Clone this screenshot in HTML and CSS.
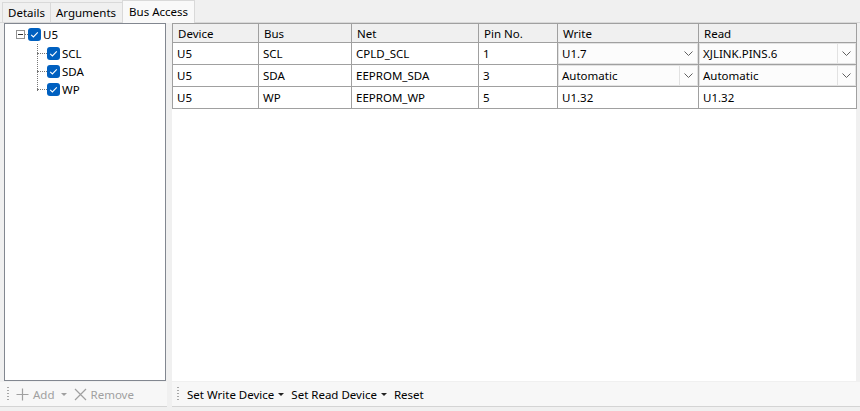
FILE: index.html
```html
<!DOCTYPE html>
<html>
<head>
<meta charset="utf-8">
<link rel="stylesheet" href="styles.css">
</head>
<body>
<div class="tabs">
  <div class="tab">Details</div>
  <div class="tab">Arguments</div>
  <div class="tab active">Bus Access</div>
</div>
<div class="panel">
  <div class="leftcol">
    <div class="tree">
      <div class="node root">
        <span class="expander"></span>
        <span class="dot-h short"></span>
        <span class="check"><svg width="13" height="13" viewBox="0 0 13 13"><rect x="0" y="0" width="13" height="13" rx="3" fill="#0060c0"/><path d="M3.2 6.8 L5.4 9 L9.8 4.4" stroke="#fff" stroke-width="1.1" fill="none"/></svg></span>
        <span class="label">U5</span>
      </div>
      <div class="children">
        <div class="node child">
          <span class="dot-h"></span>
          <span class="check"><svg width="13" height="13" viewBox="0 0 13 13"><rect x="0" y="0" width="13" height="13" rx="3" fill="#0060c0"/><path d="M3.2 6.8 L5.4 9 L9.8 4.4" stroke="#fff" stroke-width="1.1" fill="none"/></svg></span>
          <span class="label">SCL</span>
        </div>
        <div class="node child">
          <span class="dot-h"></span>
          <span class="check"><svg width="13" height="13" viewBox="0 0 13 13"><rect x="0" y="0" width="13" height="13" rx="3" fill="#0060c0"/><path d="M3.2 6.8 L5.4 9 L9.8 4.4" stroke="#fff" stroke-width="1.1" fill="none"/></svg></span>
          <span class="label">SDA</span>
        </div>
        <div class="node child last">
          <span class="dot-h"></span>
          <span class="check"><svg width="13" height="13" viewBox="0 0 13 13"><rect x="0" y="0" width="13" height="13" rx="3" fill="#0060c0"/><path d="M3.2 6.8 L5.4 9 L9.8 4.4" stroke="#fff" stroke-width="1.1" fill="none"/></svg></span>
          <span class="label">WP</span>
        </div>
      </div>
    </div>
    <div class="toolbar">
      <span class="grip"></span>
      <span class="tbtn disabled"><svg width="13" height="13" viewBox="0 0 13 13"><path d="M6.5 0.5 V12.5 M0.5 6.5 H12.5" stroke="#a0a0a0" stroke-width="1.2"/></svg>Add</span>
      <span class="caret disabled-caret"></span>
      <span class="tbtn disabled"><svg width="13" height="13" viewBox="0 0 13 13"><path d="M1 1 L12 12 M12 1 L1 12" stroke="#a0a0a0" stroke-width="1.2"/></svg>Remove</span>
    </div>
  </div>
  <div class="rightcol">
    <div class="grid">
      <table>
        <colgroup>
          <col style="width:86px"><col style="width:93px"><col style="width:127px"><col style="width:79px"><col style="width:141px"><col style="width:158px">
        </colgroup>
        <thead>
          <tr><th>Device</th><th>Bus</th><th>Net</th><th>Pin No.</th><th>Write</th><th>Read</th></tr>
        </thead>
        <tbody>
          <tr>
            <td>U5</td><td>SCL</td><td>CPLD_SCL</td><td>1</td>
            <td class="combo-cell"><div class="combo nosep"><span class="val">U1.7</span><span class="arrow"><svg width="9" height="5" viewBox="0 0 9 5"><path d="M0.5 0.5 L4.5 4.5 L8.5 0.5" stroke="#606060" fill="none"/></svg></span></div></td>
            <td class="combo-cell"><div class="combo"><span class="val">XJLINK.PINS.6</span><span class="arrow"><svg width="9" height="5" viewBox="0 0 9 5"><path d="M0.5 0.5 L4.5 4.5 L8.5 0.5" stroke="#606060" fill="none"/></svg></span></div></td>
          </tr>
          <tr>
            <td>U5</td><td>SDA</td><td>EEPROM_SDA</td><td>3</td>
            <td class="combo-cell"><div class="combo"><span class="val">Automatic</span><span class="arrow"><svg width="9" height="5" viewBox="0 0 9 5"><path d="M0.5 0.5 L4.5 4.5 L8.5 0.5" stroke="#606060" fill="none"/></svg></span></div></td>
            <td class="combo-cell"><div class="combo"><span class="val">Automatic</span><span class="arrow"><svg width="9" height="5" viewBox="0 0 9 5"><path d="M0.5 0.5 L4.5 4.5 L8.5 0.5" stroke="#606060" fill="none"/></svg></span></div></td>
          </tr>
          <tr>
            <td>U5</td><td>WP</td><td>EEPROM_WP</td><td>5</td><td>U1.32</td><td>U1.32</td>
          </tr>
        </tbody>
      </table>
    </div>
    <div class="toolbar right">
      <span class="grip"></span>
      <span class="tbtn">Set Write Device</span><span class="caret"></span>
      <span class="tbtn">Set Read Device</span><span class="caret"></span>
      <span class="tbtn">Reset</span>
    </div>
  </div>
</div>
</body>
</html>
```
FILE: styles.css
```css
html, body {
  margin: 0;
  padding: 0;
}
body {
  width: 860px;
  height: 411px;
  overflow: hidden;
  background: #f0f0f0;
  font-family: "Noto Sans", "Open Sans", sans-serif;
  font-size: 11.5px;
  color: #000;
}
.tabs {
  display: flex;
  align-items: flex-end;
  height: 23px;
  padding-left: 2px;
  box-sizing: border-box;
  border-bottom: 1px solid #d9d9d9;
}
.tab {
  height: 20px;
  line-height: 19px;
  box-sizing: border-box;
  border: 1px solid #d9d9d9;
  border-bottom: none;
  border-right: none;
  padding: 0 5px 0 5px;
  background: #f0f0f0;
}
.tab:nth-child(2) {
  border-right: 1px solid #d9d9d9;
  padding-right: 6px;
}
.tab.active {
  height: 23px;
  line-height: 21px;
  margin-bottom: -1px;
  margin-left: -1px;
  background: #f9f9f9;
  border-left: 1px solid #d9d9d9;
  border-right: 1px solid #d9d9d9;
  padding: 0 5px 0 6px;
  width: 73px;
}
.panel {
  display: flex;
  height: 388px;
}
.leftcol {
  width: 167px;
  display: flex;
  flex-direction: column;
}
.tree {
  margin: 0 0 0 4px;
  width: 162px;
  height: 358px;
  box-sizing: border-box;
  border: 1px solid #828790;
  background: #fff;
  padding: 1px 0 0 11px;
}
.node {
  display: flex;
  align-items: center;
  height: 18px;
  position: relative;
}
.expander {
  width: 9px;
  height: 9px;
  box-sizing: border-box;
  border: 1px solid #919191;
  position: relative;
  background: #fff;
}
.expander::after {
  content: "";
  position: absolute;
  left: 1px;
  top: 3px;
  width: 5px;
  height: 1px;
  background: #333;
}
.dot-h {
  width: 4px;
  height: 0;
  border-top: 1px dotted #777;
}
.dot-h.short {
  width: 3px;
}
.check {
  width: 13px;
  height: 13px;
  display: inline-flex;
}
.label {
  margin-left: 2px;
}
.children {
  margin-left: 21px;
  border-left: 1px dotted #777;
  height: 47px;
}
.children .node {
  margin-left: -1px;
}
.children .dot-h {
  width: 10px;
}
.children .node:first-child {
  margin-top: 1px;
}
.toolbar {
  height: 25px;
  box-sizing: border-box;
  border-bottom: 1px solid #d4d4d4;
  background: #f7f7f7;
  display: flex;
  align-items: center;
  padding-left: 7px;
  margin-top: 1px;
  white-space: nowrap;
}
.grip {
  width: 2px;
  height: 15px;
  background-image: linear-gradient(#a8a8a8 50%, transparent 50%);
  background-size: 2px 3px;
  margin-right: 7px;
}
.tbtn {
  display: inline-flex;
  align-items: center;
  gap: 4px;
}
.tbtn.disabled {
  color: #a0a0a0;
}
.caret {
  width: 0;
  height: 0;
  border-left: 3px solid transparent;
  border-right: 3px solid transparent;
  border-top: 3px solid #222;
  margin: 1px 6px 0 5px;
}
.caret.disabled-caret {
  border-top-color: #a0a0a0;
  margin: 1px 7px 0 6px;
}
.rightcol {
  flex: 1;
  margin-left: 5px;
  display: flex;
  flex-direction: column;
}
.grid {
  width: 684px;
  height: 358px;
  background: #fff;
}
table {
  border-collapse: collapse;
  table-layout: fixed;
  width: 685px;
}
th, td {
  border: 1px solid #a0a0a0;
  padding: 0 0 0 4px;
  text-align: left;
  font-weight: normal;
  white-space: nowrap;
  overflow: hidden;
}
th {
  height: 18px;
  background: #f0f0f0;
  padding-left: 5px;
}
td {
  height: 21px;
}
td.combo-cell {
  padding: 0;
}
.combo {
  display: flex;
  align-items: center;
  height: 21px;
  box-sizing: border-box;
  border: 1px solid #e2e2e2;
  background: #fcfcfc;
}
.combo .val {
  flex: 1;
  padding-left: 3px;
}
.combo .arrow {
  width: 17px;
  height: 19px;
  border-left: 1px solid #e2e2e2;
  display: flex;
  align-items: center;
  justify-content: center;
}
.combo.nosep .arrow {
  border-left-color: transparent;
}
.toolbar.right {
  padding-left: 5px;
}
.toolbar.right .grip {
  margin-right: 8px;
}
.toolbar.right .caret {
  margin: 1px 7px 0 4px;
}
```
